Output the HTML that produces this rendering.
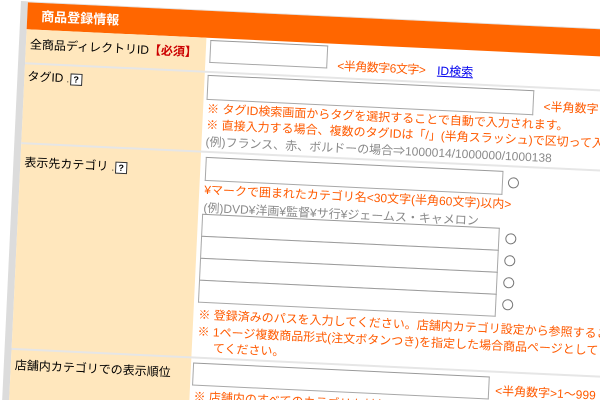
<!DOCTYPE html>
<html><head><meta charset="utf-8">
<style>
html,body{margin:0;padding:0;width:600px;height:400px;overflow:hidden;background:#fff;}
body{font-family:"Liberation Sans","Noto Sans CJK JP",sans-serif;}
#c{position:relative;width:600px;height:400px;overflow:hidden;}
#w{position:absolute;left:0;top:0;width:620px;height:400px;overflow:hidden;transform:rotate(2.7deg);transform-origin:0 0;}
.a{position:absolute;white-space:nowrap;}
.hd{left:28px;top:1px;width:600px;height:27px;background:#ff6600;color:#fff;font-weight:bold;font-size:13px;line-height:27px;}
.lab{left:28px;top:28px;width:180px;height:380px;background:#ffe7bd;}
.edge{left:21px;top:0;width:7px;height:400px;background:#dcdcdc;}
.top{left:21px;top:0;width:600px;height:1px;background:#e2e2e2;}
.ln{left:28px;width:600px;height:2px;background:#e6e6e6;}
.lt{font-size:12px;color:#000;}
.inp{border:1px solid #a8a8a8;border-top-color:#9a9a9a;background:#fff;box-sizing:border-box;}
.or{font-size:12px;color:#ff5a00;}
.gr{font-size:12px;color:#8a8a8a;}
.rd{width:11px;height:11px;border:1px solid #777;border-radius:50%;box-sizing:border-box;background:#fff;}
.q{display:inline-block;width:10px;height:10px;border:1px solid #333;font-size:9px;line-height:10px;text-align:center;font-weight:bold;vertical-align:middle;margin-left:1px;background:#fff;}
</style></head><body>
<div id="c">
<div id="w">
<div class="a top"></div>
<div class="a edge"></div>
<div class="a hd"><span style="margin-left:14px">商品登録情報</span></div>
<div class="a lab"></div>
<div class="a ln" style="top:61px"></div>
<div class="a ln" style="top:141px"></div>
<div class="a ln" style="top:347px"></div>

<div class="a lt" style="left:32px;top:34px">全商品ディレクトリID<span style="color:#c00;font-weight:bold">【必須】</span></div>
<div class="a inp" style="left:212px;top:30px;width:118px;height:23px"></div>
<div class="a or" style="left:340px;top:41px;letter-spacing:-0.5px">&lt;半角数字6文字&gt;</div>
<div class="a" style="left:440px;top:41px;font-size:12px;color:#0000ee;text-decoration:underline">ID検索</div>

<div class="a lt" style="left:31px;top:66px">タグID <span style="font-size:9px">.</span><span class="q">?</span></div>
<div class="a inp" style="left:211px;top:65px;width:327px;height:25px"></div>
<div class="a or" style="left:548px;top:72px">&lt;半角数字</div>
<div class="a or" style="left:212px;top:90px">※ タグID検索画面からタグを選択することで自動で入力されます。</div>
<div class="a or" style="left:212px;top:106px">※ 直接入力する場合、複数のタグIDは「/」(半角スラッシュ)で区切って入力</div>
<div class="a gr" style="left:212px;top:123px">(例)フランス、赤、ボルドーの場合⇒1000014/1000000/1000138</div>

<div class="a lt" style="left:32px;top:152px">表示先カテゴリ <span style="font-size:9px">.</span><span class="q">?</span></div>
<div class="a inp" style="left:213px;top:147px;width:298px;height:24px"></div>
<div class="a rd" style="left:516px;top:153px"></div>
<div class="a or" style="left:213px;top:171px">¥マークで囲まれたカテゴリ名&lt;30文字(半角60文字)以内&gt;</div>
<div class="a gr" style="left:213px;top:189px">(例)DVD¥洋画¥監督¥サ行¥ジェームス・キャメロン</div>
<div class="a inp" style="left:212px;top:204px;width:298px;height:23px"></div>
<div class="a inp" style="left:212px;top:226px;width:298px;height:23px"></div>
<div class="a inp" style="left:212px;top:248px;width:298px;height:23px"></div>
<div class="a inp" style="left:212px;top:270px;width:298px;height:23px"></div>
<div class="a rd" style="left:516px;top:209px"></div>
<div class="a rd" style="left:516px;top:231px"></div>
<div class="a rd" style="left:516px;top:253px"></div>
<div class="a rd" style="left:516px;top:275px"></div>
<div class="a or" style="left:213px;top:296px">※ 登録済みのパスを入力してください。店舗内カテゴリ設定から参照するこ</div>
<div class="a or" style="left:213px;top:313px">※ 1ページ複数商品形式(注文ボタンつき)を指定した場合商品ページとして</div>
<div class="a or" style="left:229px;top:329px">てください。</div>

<div class="a lt" style="left:32px;top:355px">店舗内カテゴリでの表示順位</div>
<div class="a inp" style="left:210px;top:353px;width:297px;height:23px"></div>
<div class="a or" style="left:513px;top:358px">&lt;半角数字&gt;1〜999</div>
<div class="a or" style="left:212px;top:378px">※ 店舗内のすべてのカテゴリを対象とした順位</div>
</div>
</div>
</body></html>
